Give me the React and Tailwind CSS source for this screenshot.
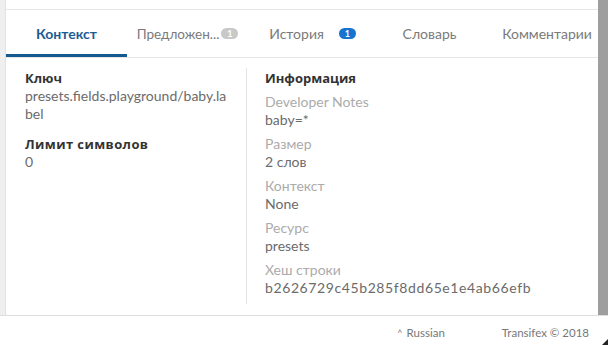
import React from "react";

const tabs = [
  { label: "Контекст", active: true },
  { label: "Предложен...", badge: "1", badgeColor: "bg-[#c8c8c8]", tight: true },
  { label: "История", badge: "1", badgeColor: "bg-[#1673cf]", shift: true },
  { label: "Словарь" },
  { label: "Комментарии", last: true },
];

const info = [
  ["Developer Notes", "baby=*"],
  ["Размер", "2 слов"],
  ["Контекст", "None"],
  ["Ресурс", "presets"],
  ["Хеш строки", "b2626729c45b285f8dd65e1e4ab66efb"],
];

const heading = "font-bold text-[#333] text-[13px] font-['Open_Sans',sans-serif]";

const App = () => {
  return (
    <div className="w-[608px] h-[345px] bg-white flex flex-col overflow-hidden text-[14px] leading-[18px] font-['Lato','Open_Sans',sans-serif]">
      <div className="flex h-[316px] border-b border-[#dedede]">
        {/* left gutter */}
        <div className="w-[6px] bg-[#efefef] border-r border-[#e2e2e2]" />

        <div className="flex-1 flex flex-col">
          <div className="h-[9px]" />
          {/* tabs */}
          <div className="flex h-[49px] border-t border-b border-[#e6e6e6]">
            {tabs.map((t, i) => (
              <div
                key={i}
                className={`relative flex items-center justify-center ${
                  t.last ? "flex-1 pl-[6px]" : "w-[121px]"
                } ${t.shift ? "pl-[8px]" : ""}`}
              >
                <span
                  className={
                    t.active
                      ? "font-bold text-[#1b5d93]"
                      : t.tight
                      ? "text-[#7a7a7a] text-[13.5px]"
                      : "text-[#7a7a7a]"
                  }
                >
                  {t.label}
                </span>
                {t.badge && (
                  <span
                    className={`${t.badgeColor} ${
                      t.tight ? "ml-[2px]" : "ml-[15px]"
                    } w-[17px] h-[11px] rounded-full text-white text-[9px] leading-[11px] font-bold flex items-center justify-center`}
                  >
                    {t.badge}
                  </span>
                )}
                {t.active && (
                  <span className="absolute left-0 right-0 bottom-0 h-[3px] bg-[#16598e]" />
                )}
              </div>
            ))}
          </div>

          {/* content */}
          <div className="flex pt-[10px]">
            <div className="w-[241px] pl-[19px] pr-[16px] pt-[1px] border-r border-[#e4e4e4] h-[236px]">
              <div className={heading}>Ключ</div>
              <div className="text-[#6b6b6b]">
                presets.fields.playground/baby.la
                <br />
                bel
              </div>
              <div className={`${heading} mt-[12px] tracking-[0.4px]`}>Лимит символов</div>
              <div className="text-[#6b6b6b]">0</div>
            </div>
            <div className="pl-[18px] pt-[1px]">
              <div className={`${heading} mb-[6px]`}>Информация</div>
              {info.map(([k, v], i) => (
                <div key={i} className="mb-[6px]">
                  <div className="text-[#ababab]">{k}</div>
                  <div className={`text-[#6b6b6b] ${i === 4 ? "tracking-[0.6px]" : ""}`}>{v}</div>
                </div>
              ))}
            </div>
          </div>
        </div>

        {/* scrollbar */}
        <div className="w-[10px] bg-[#9e9e9e]" />
      </div>

      {/* footer */}
      <div className="relative flex-1 flex items-center justify-end pt-[5px] pr-[19px] text-[11.5px] text-[#777]">
        <span className="mr-[57px]">
          <span className="text-[9px] mr-[4px] align-top">^</span>Russian
        </span>
        <span>Transifex © 2018</span>
        <span className="absolute right-0 bottom-0 w-0 h-0 border-l-[6px] border-l-transparent border-b-[6px] border-b-[#222]" />
      </div>
    </div>
  );
};

export default App;
